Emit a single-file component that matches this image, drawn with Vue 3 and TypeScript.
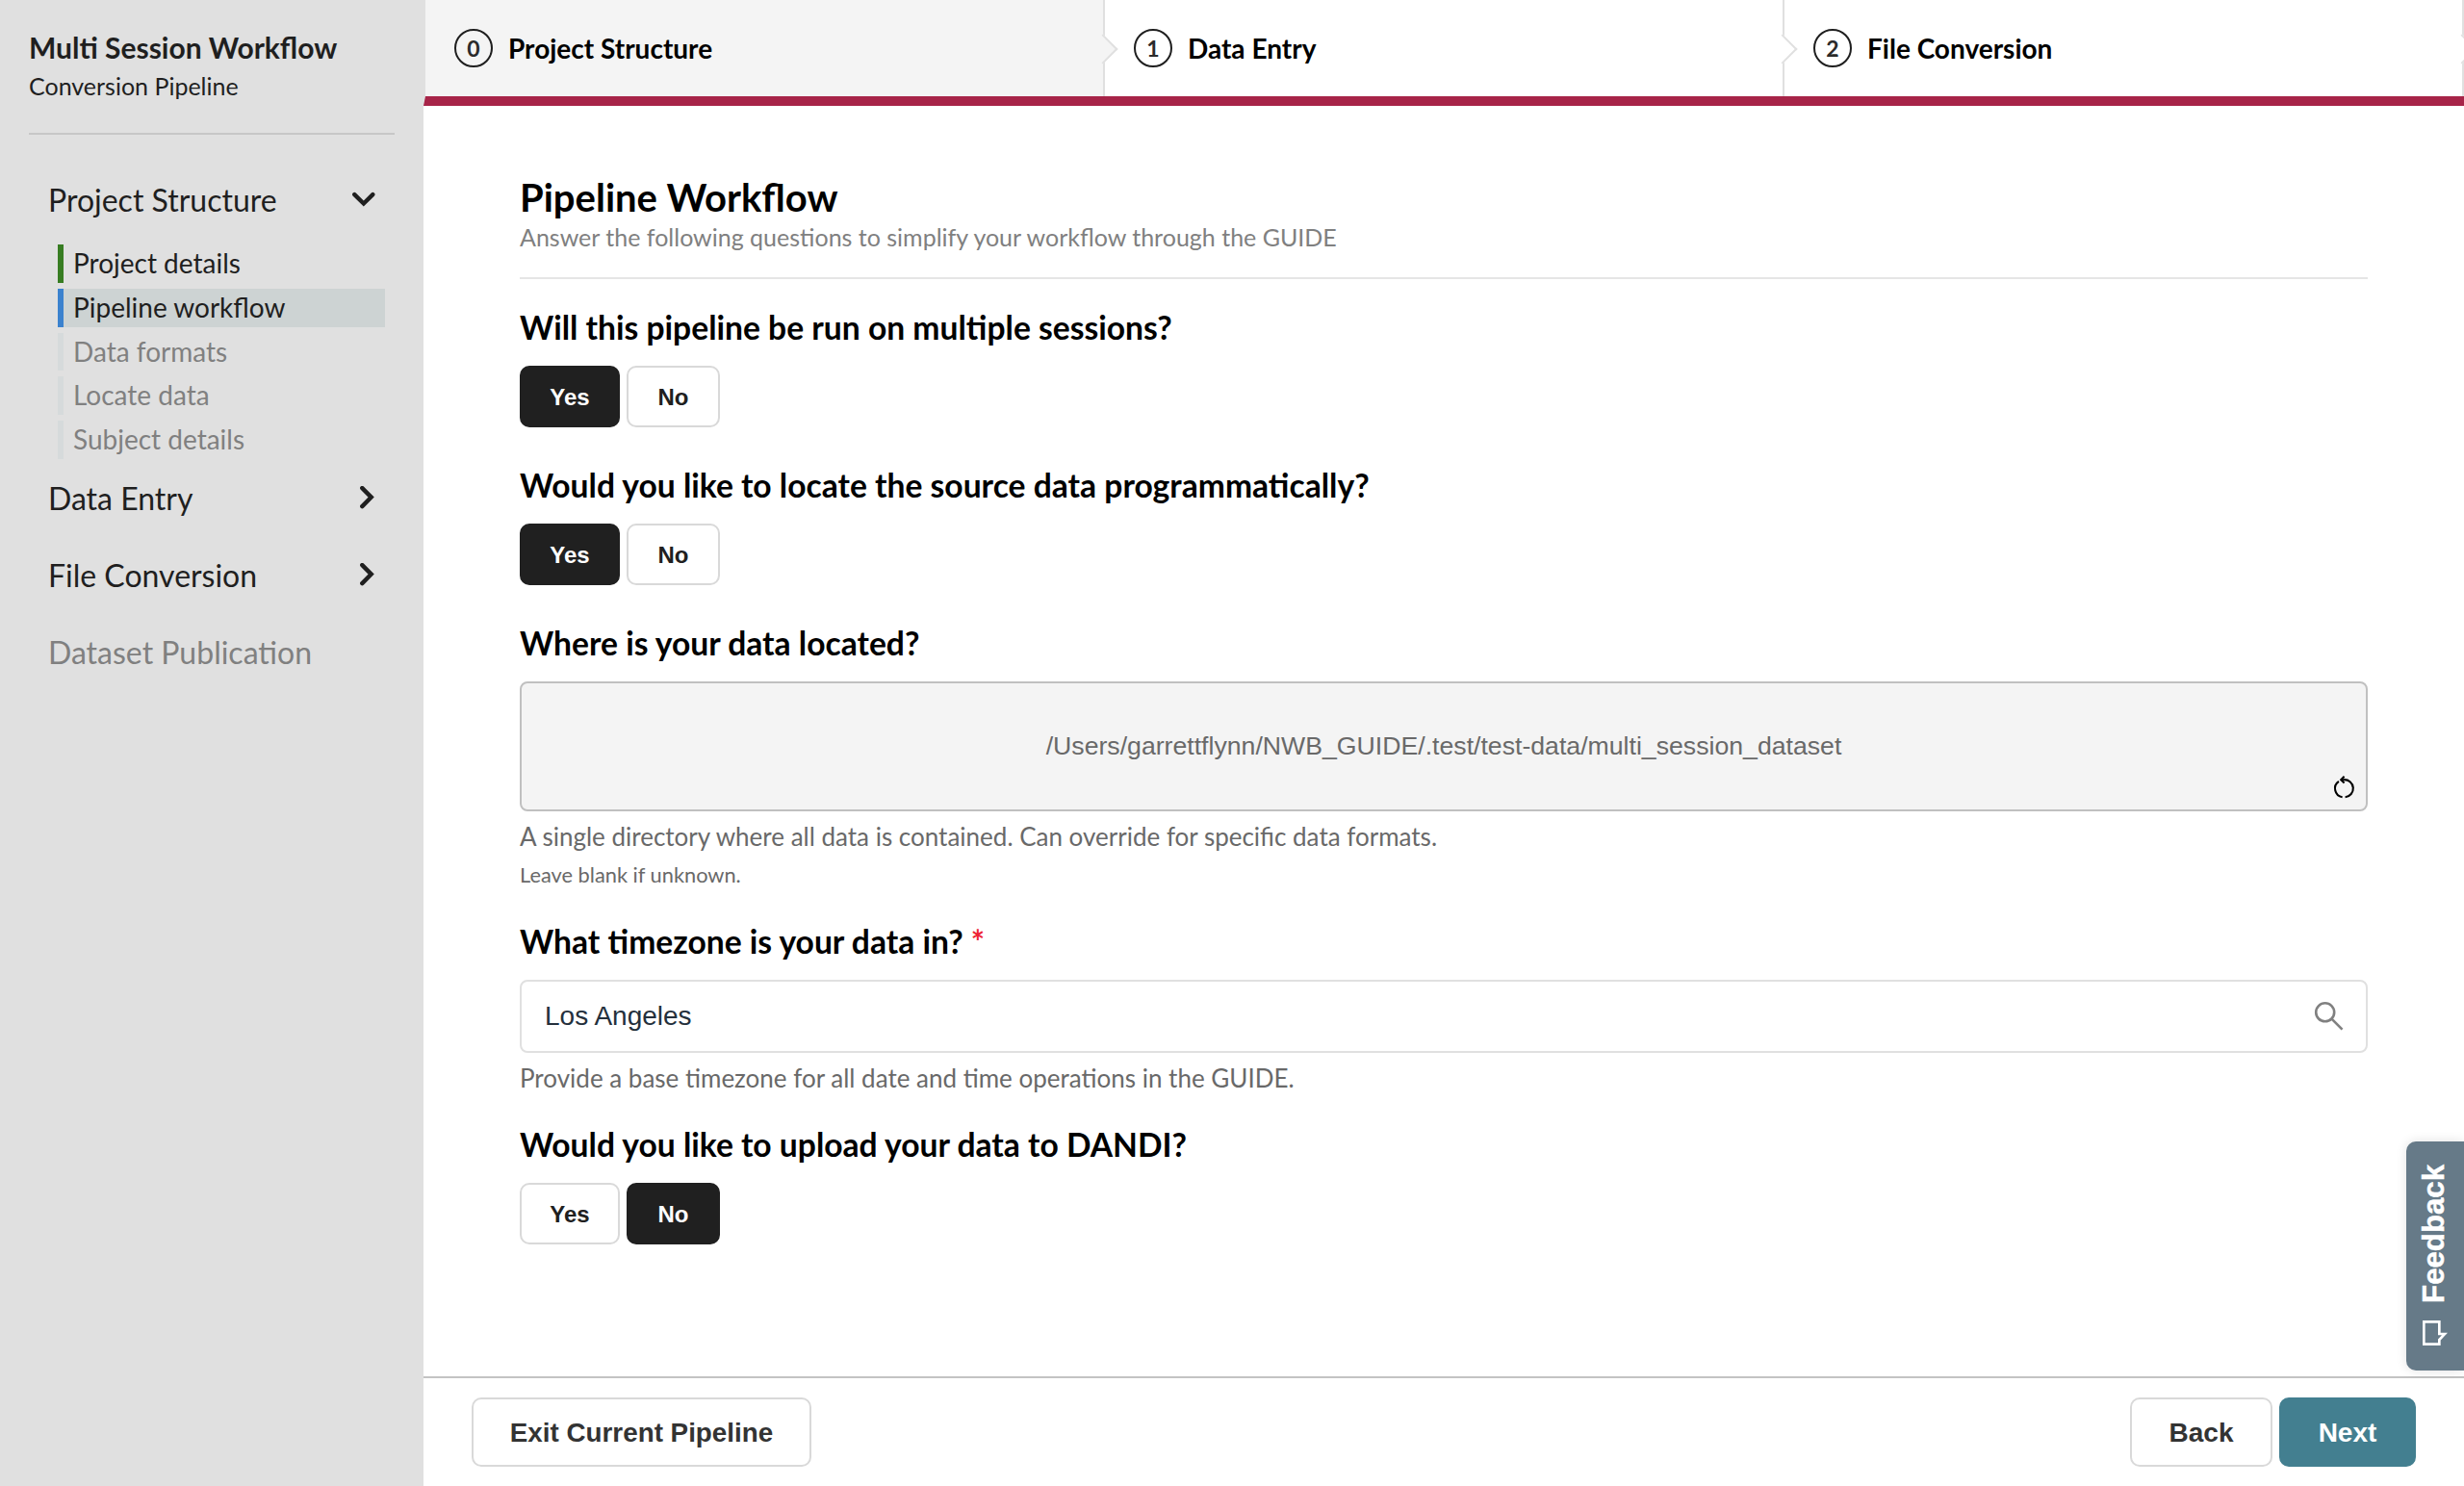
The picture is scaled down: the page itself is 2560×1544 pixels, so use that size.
<script setup lang="ts">
import { ref } from 'vue'

interface Page { label: string; state: 'done' | 'active' | 'locked' }
interface Section { label: string; open?: boolean; disabled?: boolean; pages?: Page[] }

const sections: Section[] = [
  {
    label: 'Project Structure',
    open: true,
    pages: [
      { label: 'Project details', state: 'done' },
      { label: 'Pipeline workflow', state: 'active' },
      { label: 'Data formats', state: 'locked' },
      { label: 'Locate data', state: 'locked' },
      { label: 'Subject details', state: 'locked' },
    ],
  },
  { label: 'Data Entry' },
  { label: 'File Conversion' },
  { label: 'Dataset Publication', disabled: true },
]

const steps = ['Project Structure', 'Data Entry', 'File Conversion']
const options = ['Yes', 'No']

const multiple = ref('Yes')
const locate = ref('Yes')
const upload = ref('No')
const directory = ref('/Users/garrettflynn/NWB_GUIDE/.test/test-data/multi_session_dataset')
const timezone = ref('Los Angeles')
</script>

<template>
  <div class="app">
    <aside class="sidebar">
      <div class="project">
        <h2>Multi Session Workflow</h2>
        <p>Conversion Pipeline</p>
      </div>
      <nav>
        <template v-for="section in sections" :key="section.label">
          <div class="section" :class="{ disabled: section.disabled }">
            <span>{{ section.label }}</span>
            <svg v-if="section.open" width="24" height="16" viewBox="0 0 24 16">
              <path d="M2.3 3.1L11.8 12.5L21.3 3.1" class="chevron" />
            </svg>
            <svg v-else-if="!section.disabled" width="16" height="24" viewBox="0 0 16 24">
              <path d="M2.3 2.1L11.7 11.6L2.3 21.1" class="chevron" />
            </svg>
          </div>
          <ul v-if="section.pages" class="pages">
            <li v-for="page in section.pages" :key="page.label" :class="page.state">{{ page.label }}</li>
          </ul>
        </template>
      </nav>
    </aside>

    <div class="main">
      <ol class="steps">
        <li v-for="(step, i) in steps" :key="step" :class="{ current: i === 0 }">
          <span class="number">{{ i }}</span>
          <span>{{ step }}</span>
        </li>
      </ol>

      <main class="content">
        <h1>Pipeline Workflow</h1>
        <p class="subtitle">Answer the following questions to simplify your workflow through the GUIDE</p>
        <hr />

        <section class="field">
          <h3>Will this pipeline be run on multiple sessions?</h3>
          <div class="toggle">
            <button v-for="o in options" :key="o" :class="{ on: multiple === o }" @click="multiple = o">{{ o }}</button>
          </div>
        </section>

        <section class="field">
          <h3>Would you like to locate the source data programmatically?</h3>
          <div class="toggle">
            <button v-for="o in options" :key="o" :class="{ on: locate === o }" @click="locate = o">{{ o }}</button>
          </div>
        </section>

        <section class="field directory-field">
          <h3>Where is your data located?</h3>
          <div class="directory">
            <span>{{ directory }}</span>
            <svg class="reset" width="24" height="24" viewBox="0 0 24 24" @click="directory = ''">
              <path d="M9.2 3.2H12A9 9 0 0 1 13.6 21.2" />
              <path d="M6.9 4.9A9 9 0 0 0 10.6 21.2" />
              <path d="M12.6 -0.2L9.2 3.2L12.6 6.6" />
            </svg>
          </div>
          <p class="help">A single directory where all data is contained. Can override for specific data formats.</p>
          <p class="note">Leave blank if unknown.</p>
        </section>

        <section class="field timezone-field">
          <h3>What timezone is your data in? <span class="required">*</span></h3>
          <div class="search">
            <span>{{ timezone }}</span>
            <svg width="32" height="32" viewBox="0 0 32 32">
              <circle cx="11.7" cy="11.8" r="9.5" />
              <path d="M18.5 18.7L29.5 29.7" />
            </svg>
          </div>
          <p class="help">Provide a base timezone for all date and time operations in the GUIDE.</p>
        </section>

        <section class="field">
          <h3>Would you like to upload your data to DANDI?</h3>
          <div class="toggle">
            <button v-for="o in options" :key="o" :class="{ on: upload === o }" @click="upload = o">{{ o }}</button>
          </div>
        </section>
      </main>

      <footer class="footer">
        <button class="exit">Exit Current Pipeline</button>
        <div class="nav-buttons">
          <button class="back">Back</button>
          <button class="next">Next</button>
        </div>
      </footer>
    </div>

    <button class="feedback">
      <svg width="26" height="26" viewBox="0 0 78 78">
        <path d="M4 4H52V42H69L52 60V74H4Z" />
      </svg>
      <span>Feedback</span>
    </button>
  </div>
</template>

<style>
body {
  background: #fff;
}
</style>

<style scoped>
* {
  box-sizing: border-box;
}
.app {
  display: flex;
  width: 100vw;
  height: 100vh;
  overflow: hidden;
  font-family: Lato, sans-serif;
  color: #000;
}
h1, h2, h3, p, ul, ol {
  margin: 0;
  padding: 0;
  list-style: none;
}
button {
  margin: 0;
  padding: 0;
  font-family: 'Liberation Sans', Arial, sans-serif;
  font-weight: 700;
}

.sidebar {
  flex: none;
  width: 440px;
  background: #e0e0e0;
  color: #1f1f1f;
}
.project {
  height: 140px;
  margin: 0 30px;
  padding-top: 31px;
  border-bottom: 2px solid #c7c7c7;
}
.project h2 {
  font-size: 30px;
  line-height: 36px;
}
.project p {
  margin-top: 7px;
  font-size: 25px;
  line-height: 30px;
}
nav {
  padding: 27px 50px 0;
}
.section {
  display: flex;
  align-items: center;
  justify-content: space-between;
  height: 80px;
  font-size: 32px;
  line-height: 39px;
}
.section span {
  padding-top: 1.5px;
}
.section.disabled {
  color: #808080;
}
.chevron {
  fill: none;
  stroke: #1f1f1f;
  stroke-width: 4.4;
  stroke-linecap: round;
}
.pages {
  margin: 7px -10px 0 10px;
  font-size: 28px;
}
.pages li {
  height: 39.75px;
  margin-bottom: 6px;
  padding-left: 10px;
  border-left: 6px solid #d6dadb;
  line-height: 39.6px;
}
.pages li:last-child {
  margin-bottom: 0;
}
.pages .done {
  border-color: #377d22;
}
.pages .active {
  border-color: #3b82ce;
  background: #cdd3d3;
}
.pages .locked {
  color: #808080;
}

.main {
  flex: 1;
  display: flex;
  flex-direction: column;
  min-width: 0;
}
.steps {
  display: flex;
  height: 110px;
  border-left: 2px solid #e0e0e0;
  border-bottom: 10px solid #a72448;
}
.steps li {
  position: relative;
  flex: 1;
  display: flex;
  align-items: center;
  gap: 16px;
  padding-left: 30px;
  border-right: 2px solid #e0e0e0;
  font-size: 28px;
  font-weight: 700;
  line-height: 34px;
  background: #fff;
}
.steps li.current {
  background: #f4f4f4;
}
.steps li:nth-child(1) { z-index: 3; }
.steps li:nth-child(2) { z-index: 2; }
.steps li:nth-child(3) { z-index: 1; }
/* Arrow that points from each step to the next */
.steps li::after {
  content: '';
  position: absolute;
  top: 40px;
  right: -11px;
  width: 20px;
  height: 20px;
  border-top: 2px solid #e0e0e0;
  border-right: 2px solid #e0e0e0;
  background: inherit;
  transform: rotate(45deg);
}
.number {
  display: flex;
  align-items: center;
  justify-content: center;
  width: 40px;
  height: 40px;
  border: 2px solid #1f1f1f;
  border-radius: 50%;
  font-size: 23px;
  color: #2b2b2b;
}

.content {
  flex: 1;
  padding: 71px 100px 0;
}
h1 {
  font-size: 40px;
  line-height: 48px;
}
.subtitle {
  margin-top: 2px;
  font-size: 25px;
  line-height: 30px;
  color: #808080;
}
hr {
  height: 2px;
  margin: 27px 0 30px;
  border: 0;
  background: #e5e5e5;
}
.field {
  margin-bottom: 40px;
}
.directory-field {
  margin-bottom: 36px;
}
.timezone-field {
  margin-bottom: 33px;
}
h3 {
  margin-bottom: 20px;
  font-size: 33.61px;
  line-height: 40px;
}
.required {
  color: #ee2233;
}
.toggle {
  display: flex;
  gap: 7px;
}
.toggle button {
  width: 97px;
  height: 64px;
  padding-top: 1px;
  border: 2px solid #d9d9d9;
  border-radius: 10px;
  background: #fff;
  font-size: 24px;
  color: #202020;
}
.toggle button:first-child {
  width: 104px;
}
.toggle .on {
  border-color: #202020;
  background: #202020;
  color: #fff;
}
.directory {
  position: relative;
  display: flex;
  align-items: center;
  justify-content: center;
  height: 135px;
  border: 2px solid #c0c0c0;
  border-radius: 8px;
  background: #f4f4f4;
  font-family: 'Liberation Sans', Arial, sans-serif;
  font-size: 26.67px;
  color: #696969;
}
.reset {
  position: absolute;
  right: 11px;
  bottom: 10px;
  overflow: visible;
  fill: none;
  stroke: #000;
  stroke-width: 2.1;
}
.help {
  margin-top: 10px;
  font-size: 26px;
  line-height: 32px;
  color: #696969;
}
.note {
  margin-top: 10px;
  font-size: 21.8px;
  line-height: 27px;
  color: #696969;
}
.search {
  display: flex;
  align-items: center;
  justify-content: space-between;
  height: 76px;
  padding: 0 22px 0 24px;
  border: 2px solid #e0e0e0;
  border-radius: 8px;
  font-family: 'Liberation Sans', Arial, sans-serif;
  font-size: 28px;
  color: #24303c;
}
.search svg {
  fill: none;
  stroke: #808080;
  stroke-width: 2.6;
}

.footer {
  display: flex;
  align-items: flex-start;
  justify-content: space-between;
  height: 114px;
  padding: 20px 50px 0;
  border-top: 2px solid #c3c3c3;
}
.footer button {
  height: 72px;
  padding-top: 1px;
  border: 2px solid #d9d9d9;
  border-radius: 10px;
  background: #fff;
  font-size: 28px;
  color: #333;
}
.footer .exit {
  width: 353px;
  font-size: 27.8px;
}
.nav-buttons {
  display: flex;
  gap: 7px;
}
.footer .back {
  width: 148px;
}
.footer .next {
  width: 142px;
  border-color: #437f90;
  background: #437f90;
  color: #fff;
}

.feedback {
  position: absolute;
  top: 1186px;
  right: 0;
  display: flex;
  flex-direction: column-reverse;
  align-items: center;
  justify-content: flex-start;
  gap: 18px;
  width: 60px;
  height: 238px;
  padding-bottom: 26px;
  border: 0;
  border-radius: 10px 0 0 10px;
  background: #667a88;
  box-shadow: 0 0 12px rgba(0, 0, 0, 0.12);
  color: #fff;
  font-size: 31.2px;
}
.feedback span {
  margin-right: 2px;
  writing-mode: vertical-rl;
  transform: rotate(180deg);
  line-height: 36px;
  -webkit-text-stroke: 0.5px #fff;
}
.feedback svg {
  flex: none;
  fill: none;
  stroke: #fff;
  stroke-width: 8;
}
</style>
